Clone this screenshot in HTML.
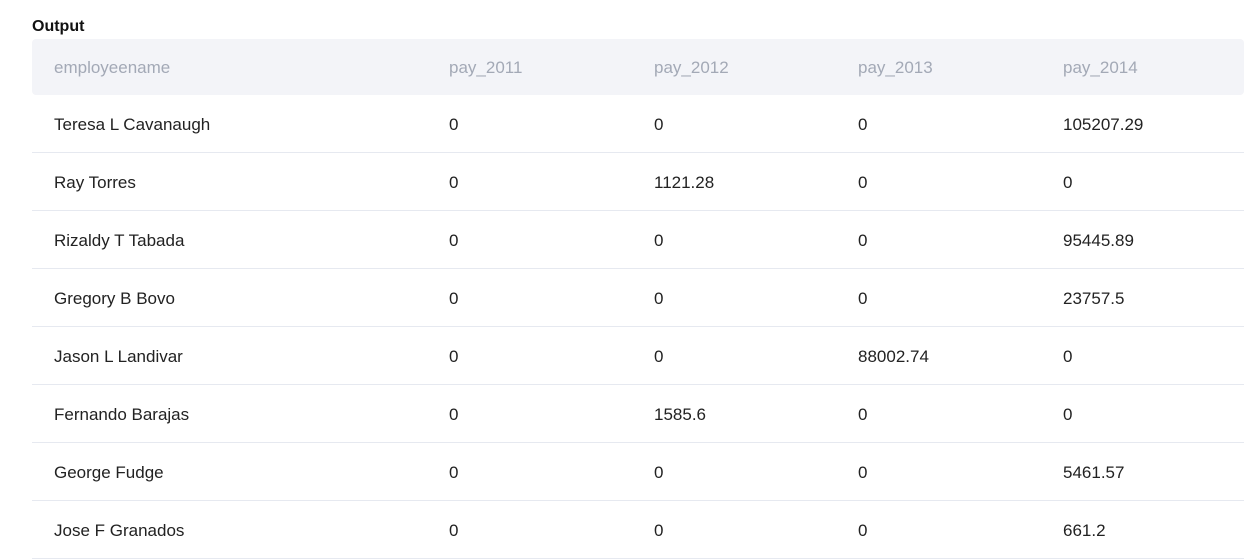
<!DOCTYPE html>
<html><head><style>
body{margin:0;width:1253px;height:559px;overflow:hidden;background:#fff;font-family:"Liberation Sans",sans-serif;}
.t{position:absolute;left:32px;top:18px;font-size:16px;font-weight:bold;color:#111;}
.hd{position:absolute;left:32px;top:39px;width:1212px;height:56px;background:#f3f4f8;border-radius:4px;}
.row{position:absolute;left:32px;width:1212px;height:58px;border-bottom:1px solid #e6e9f0;box-sizing:border-box;}
.c{position:absolute;font-size:17px;color:#222;line-height:20px;}
.hd .c{color:#a3a9b6;top:19px;}
.row .c{top:20px;}
</style></head><body>
<div class="t">Output</div>
<div class="hd"><span class="c" style="left:22px">employeename</span><span class="c" style="left:417px">pay_2011</span><span class="c" style="left:622px">pay_2012</span><span class="c" style="left:826px">pay_2013</span><span class="c" style="left:1031px">pay_2014</span></div>
<div class="row" style="top:95px"><span class="c" style="left:22px">Teresa L Cavanaugh</span><span class="c" style="left:417px">0</span><span class="c" style="left:622px">0</span><span class="c" style="left:826px">0</span><span class="c" style="left:1031px">105207.29</span></div>
<div class="row" style="top:153px"><span class="c" style="left:22px">Ray Torres</span><span class="c" style="left:417px">0</span><span class="c" style="left:622px">1121.28</span><span class="c" style="left:826px">0</span><span class="c" style="left:1031px">0</span></div>
<div class="row" style="top:211px"><span class="c" style="left:22px">Rizaldy T Tabada</span><span class="c" style="left:417px">0</span><span class="c" style="left:622px">0</span><span class="c" style="left:826px">0</span><span class="c" style="left:1031px">95445.89</span></div>
<div class="row" style="top:269px"><span class="c" style="left:22px">Gregory B Bovo</span><span class="c" style="left:417px">0</span><span class="c" style="left:622px">0</span><span class="c" style="left:826px">0</span><span class="c" style="left:1031px">23757.5</span></div>
<div class="row" style="top:327px"><span class="c" style="left:22px">Jason L Landivar</span><span class="c" style="left:417px">0</span><span class="c" style="left:622px">0</span><span class="c" style="left:826px">88002.74</span><span class="c" style="left:1031px">0</span></div>
<div class="row" style="top:385px"><span class="c" style="left:22px">Fernando Barajas</span><span class="c" style="left:417px">0</span><span class="c" style="left:622px">1585.6</span><span class="c" style="left:826px">0</span><span class="c" style="left:1031px">0</span></div>
<div class="row" style="top:443px"><span class="c" style="left:22px">George Fudge</span><span class="c" style="left:417px">0</span><span class="c" style="left:622px">0</span><span class="c" style="left:826px">0</span><span class="c" style="left:1031px">5461.57</span></div>
<div class="row" style="top:501px"><span class="c" style="left:22px">Jose F Granados</span><span class="c" style="left:417px">0</span><span class="c" style="left:622px">0</span><span class="c" style="left:826px">0</span><span class="c" style="left:1031px">661.2</span></div>
</body></html>
